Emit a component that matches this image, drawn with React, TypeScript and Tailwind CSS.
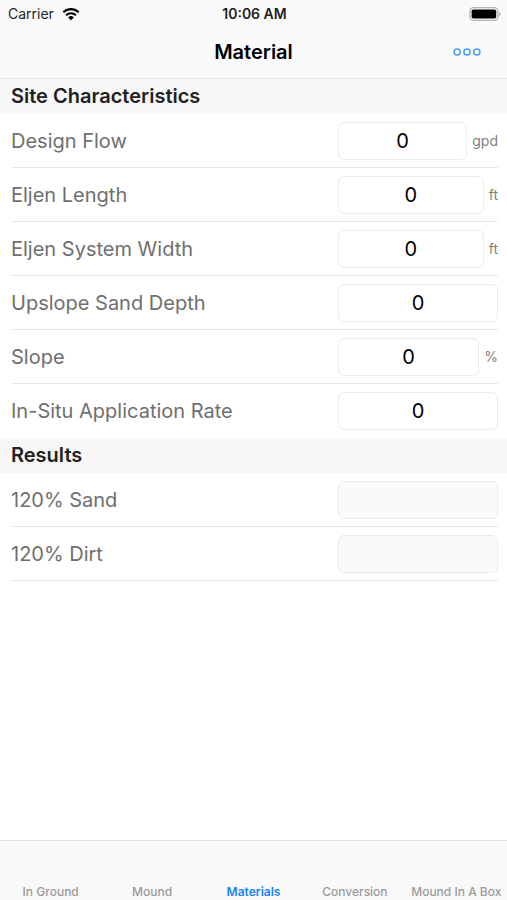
import React, { useState } from "react";

interface Field {
  id: string;
  label: string;
  unit?: string;
}

interface FieldRowProps {
  field: Field;
  value: string;
  readOnly?: boolean;
  divider?: boolean;
  onChange?: (value: string) => void;
}

const siteFields: Field[] = [
  { id: "designFlow", label: "Design Flow", unit: "gpd" },
  { id: "eljenLength", label: "Eljen Length", unit: "ft" },
  { id: "eljenWidth", label: "Eljen System Width", unit: "ft" },
  { id: "sandDepth", label: "Upslope Sand Depth" },
  { id: "slope", label: "Slope", unit: "%" },
  { id: "applicationRate", label: "In-Situ Application Rate" },
];

const resultFields: Field[] = [
  { id: "sand", label: "120% Sand" },
  { id: "dirt", label: "120% Dirt" },
];

const tabs = ["In Ground", "Mound", "Materials", "Conversion", "Mound In A Box"];

const WifiIcon = () => (
  <svg width="18" height="13" viewBox="0 0 18 13" fill="none" aria-hidden="true">
    <path d="M1.3 4.2a11 11 0 0 1 15.4 0" stroke="#000" strokeWidth="2.2" />
    <path d="M4.1 7.2a7 7 0 0 1 9.8 0" stroke="#000" strokeWidth="2.1" />
    <path d="M9 12.2 6.2 9.4a4 4 0 0 1 5.6 0Z" fill="#000" />
  </svg>
);

const BatteryIcon = () => (
  <svg width="32" height="15" viewBox="0 0 32 15" fill="none" aria-hidden="true">
    <rect x="0.9" y="0.7" width="28" height="12.6" rx="3.6" stroke="#b4b4b4" strokeWidth="1.3" />
    <rect x="2.6" y="2.4" width="24.6" height="9.2" rx="1.8" fill="#000" />
    <path d="M30.2 4.8c1.7.8 1.7 3.8 0 4.6Z" fill="#a3a3a3" />
  </svg>
);

const MoreIcon = () => (
  <svg width="28" height="10" viewBox="0 0 28 10" fill="none" stroke="#4a9df6" strokeWidth="1.5" aria-hidden="true">
    <circle cx="4.2" cy="5" r="3.1" />
    <circle cx="14" cy="5" r="3.1" />
    <circle cx="23.8" cy="5" r="3.1" />
  </svg>
);

const SectionTitle = ({ children }: { children: React.ReactNode }) => (
  <h2 className="bg-[#f7f7f7] px-[11px] text-xl leading-[35px] font-semibold text-[#222222]">
    {children}
  </h2>
);

const FieldRow: React.FC<FieldRowProps> = ({
  field,
  value,
  readOnly = false,
  divider = true,
  onChange,
}) => (
  <div
    className={`ml-[11px] mr-[9px] flex h-[54px] items-center justify-between border-b ${
      divider ? "border-[#e9e9e9]" : "border-transparent"
    }`}
  >
    <label htmlFor={field.id} className="text-xl text-[#6f6f6f]">
      {field.label}
    </label>
    <div className="flex w-40 items-center gap-[5px]">
      <input
        id={field.id}
        type="text"
        inputMode="decimal"
        value={value}
        readOnly={readOnly}
        onChange={(e) => onChange?.(e.target.value)}
        className={`h-[38px] min-w-0 flex-1 rounded-md border border-[#ebebeb] text-center text-xl text-black outline-none ${
          readOnly ? "bg-[#fafafa]" : "bg-white"
        }`}
      />
      {field.unit && (
        <span className="text-sm text-[#808080]">{field.unit}</span>
      )}
    </div>
  </div>
);

const App: React.FC = () => {
  const [values, setValues] = useState<Record<string, string>>({});
  const [activeTab, setActiveTab] = useState("Materials");

  return (
    <div className="flex min-h-screen flex-col bg-white font-['Inter','Liberation_Sans',sans-serif]">
      <header className="border-b border-[#e4e4e4] bg-[#fafafa]">
        {/* Status bar */}
        <div className="grid h-7 grid-cols-3 items-center pr-[6px] pl-2 text-sm text-[#1f1f1f]">
          <div className="flex items-center gap-2">
            <span>Carrier</span>
            <WifiIcon />
          </div>
          <span className="text-center font-semibold">10:06 AM</span>
          <div className="flex justify-end">
            <BatteryIcon />
          </div>
        </div>

        {/* Title bar */}
        <div className="grid h-[50px] grid-cols-3 items-center px-[26px] pb-[2px]">
          <h1 className="col-start-2 text-center text-xl font-semibold text-black">
            Material
          </h1>
          <button type="button" aria-label="More" className="justify-self-end">
            <MoreIcon />
          </button>
        </div>
      </header>

      <main className="flex-1">
        <SectionTitle>Site Characteristics</SectionTitle>
        {siteFields.map((field, index) => (
          <FieldRow
            key={field.id}
            field={field}
            value={values[field.id] ?? "0"}
            divider={index < siteFields.length - 1}
            onChange={(value) => setValues({ ...values, [field.id]: value })}
          />
        ))}

        <SectionTitle>Results</SectionTitle>
        {resultFields.map((field) => (
          <FieldRow key={field.id} field={field} value="" readOnly />
        ))}
      </main>

      {/* Tab bar */}
      <nav className="grid h-[60px] grid-cols-5 border-t border-[#e0e0e0] bg-[#f9f9f9]">
        {tabs.map((tab) => (
          <button
            key={tab}
            type="button"
            onClick={() => setActiveTab(tab)}
            className={`flex items-end justify-center text-xs whitespace-nowrap ${
              tab === activeTab
                ? "font-semibold text-[#1a82fb]"
                : "font-medium text-[#9b9b9b]"
            }`}
          >
            {tab}
          </button>
        ))}
      </nav>
    </div>
  );
};

export default App;
